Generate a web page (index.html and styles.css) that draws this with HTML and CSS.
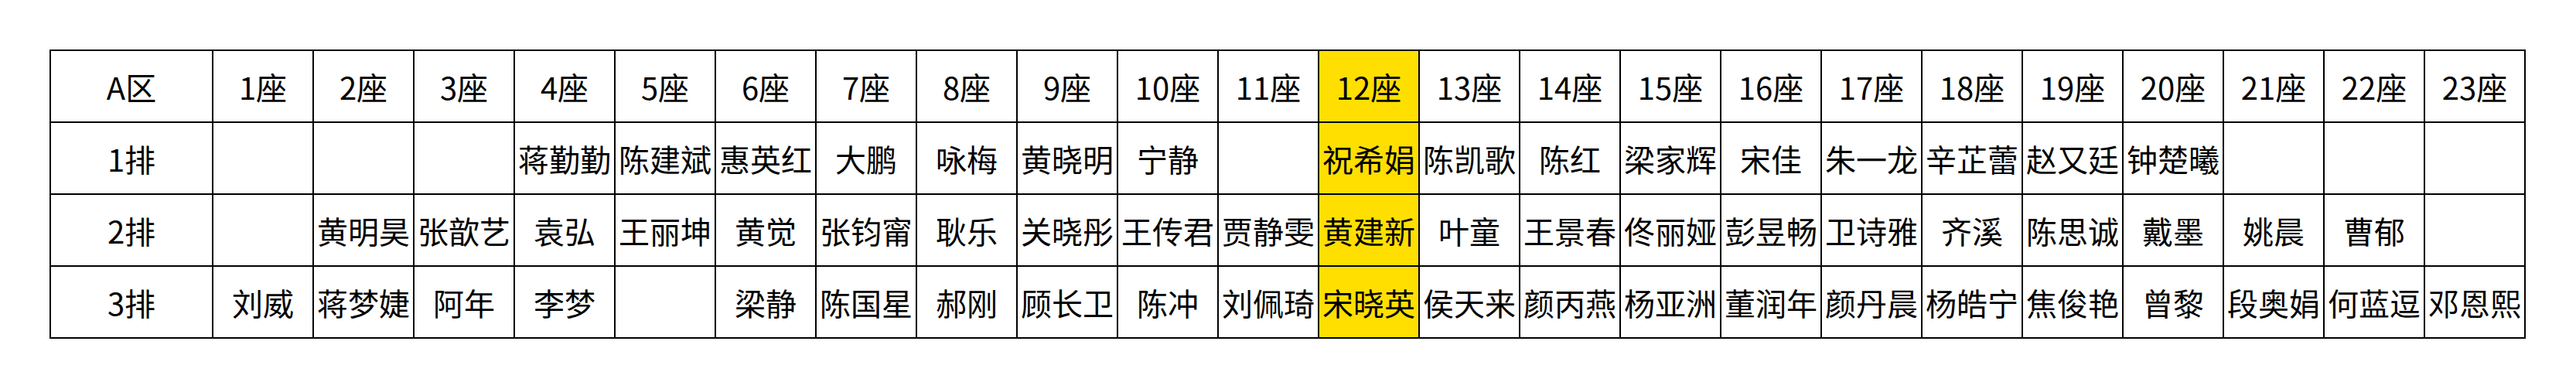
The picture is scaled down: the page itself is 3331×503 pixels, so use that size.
FILE: index.html
```html
<!DOCTYPE html>
<html lang="zh-CN">
<head>
<meta charset="utf-8">
<title>A区座位表</title>
<link rel="stylesheet" href="styles.css">
</head>
<body>
<div class="page">
  <div class="seat-grid">
    <div class="cell">A区</div>
    <div class="cell">1座</div><div class="cell">2座</div><div class="cell">3座</div><div class="cell">4座</div><div class="cell">5座</div><div class="cell">6座</div><div class="cell">7座</div><div class="cell">8座</div><div class="cell">9座</div><div class="cell">10座</div><div class="cell">11座</div><div class="cell hl">12座</div><div class="cell">13座</div><div class="cell">14座</div><div class="cell">15座</div><div class="cell">16座</div><div class="cell">17座</div><div class="cell">18座</div><div class="cell">19座</div><div class="cell">20座</div><div class="cell">21座</div><div class="cell">22座</div><div class="cell">23座</div>

    <div class="cell">1排</div>
    <div class="cell"></div><div class="cell"></div><div class="cell"></div><div class="cell">蒋勤勤</div><div class="cell">陈建斌</div><div class="cell">惠英红</div><div class="cell">大鹏</div><div class="cell">咏梅</div><div class="cell">黄晓明</div><div class="cell">宁静</div><div class="cell"></div><div class="cell hl">祝希娟</div><div class="cell">陈凯歌</div><div class="cell">陈红</div><div class="cell">梁家辉</div><div class="cell">宋佳</div><div class="cell">朱一龙</div><div class="cell">辛芷蕾</div><div class="cell">赵又廷</div><div class="cell">钟楚曦</div><div class="cell"></div><div class="cell"></div><div class="cell"></div>

    <div class="cell">2排</div>
    <div class="cell"></div><div class="cell">黄明昊</div><div class="cell">张歆艺</div><div class="cell">袁弘</div><div class="cell">王丽坤</div><div class="cell">黄觉</div><div class="cell">张钧甯</div><div class="cell">耿乐</div><div class="cell">关晓彤</div><div class="cell">王传君</div><div class="cell">贾静雯</div><div class="cell hl">黄建新</div><div class="cell">叶童</div><div class="cell">王景春</div><div class="cell">佟丽娅</div><div class="cell">彭昱畅</div><div class="cell">卫诗雅</div><div class="cell">齐溪</div><div class="cell">陈思诚</div><div class="cell">戴墨</div><div class="cell">姚晨</div><div class="cell">曹郁</div><div class="cell"></div>

    <div class="cell">3排</div>
    <div class="cell">刘威</div><div class="cell">蒋梦婕</div><div class="cell">阿年</div><div class="cell">李梦</div><div class="cell"></div><div class="cell">梁静</div><div class="cell">陈国星</div><div class="cell">郝刚</div><div class="cell">顾长卫</div><div class="cell">陈冲</div><div class="cell">刘佩琦</div><div class="cell hl">宋晓英</div><div class="cell">侯天来</div><div class="cell">颜丙燕</div><div class="cell">杨亚洲</div><div class="cell">董润年</div><div class="cell">颜丹晨</div><div class="cell">杨皓宁</div><div class="cell">焦俊艳</div><div class="cell">曾黎</div><div class="cell">段奥娟</div><div class="cell">何蓝逗</div><div class="cell">邓恩熙</div>
  </div>
</div>
</body>
</html>
```

FILE: styles.css
```css
html, body {
  margin: 0;
  padding: 0;
  background: #ffffff;
}

.page {
  padding: 64px 0 0 64px;
}

.seat-grid {
  display: inline-grid;
  grid-template-columns: 208px repeat(23, 128px);
  grid-auto-rows: 91px;
  gap: 2px;
  padding: 2px;
  background: #000000;
  font-family: "Noto Sans CJK SC", "Noto Sans", sans-serif;
  font-size: 40px;
  color: #000000;
}

.cell {
  background: #ffffff;
  display: flex;
  align-items: center;
  justify-content: center;
  white-space: nowrap;
  overflow: hidden;
  line-height: 1;
}

.cell.hl {
  background: #ffdf00;
}
```
